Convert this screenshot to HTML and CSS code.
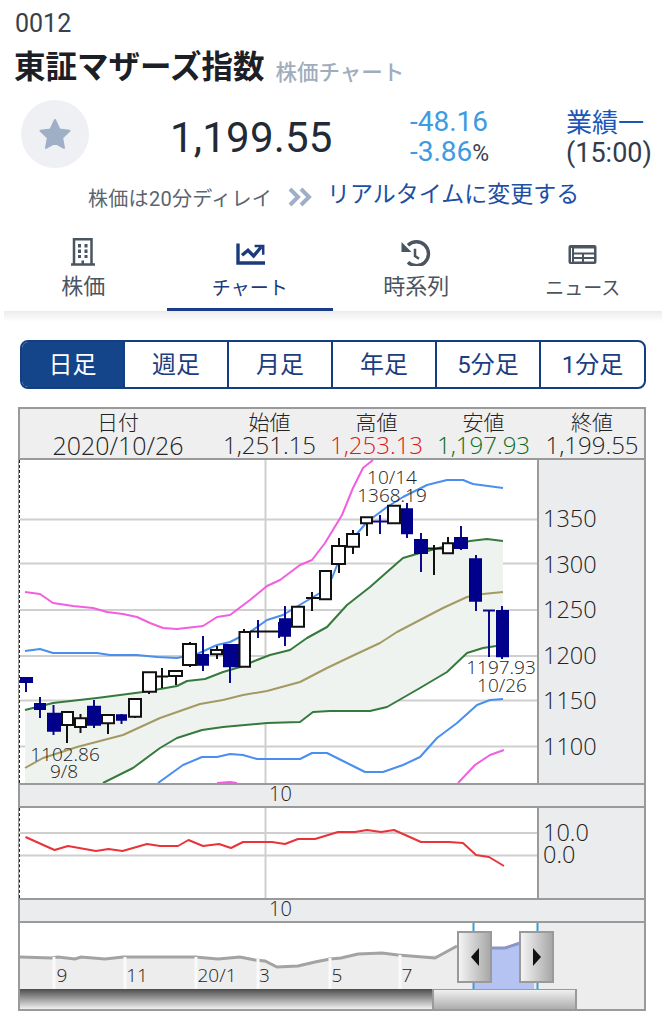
FILE: index.html
```html
<!DOCTYPE html>
<html lang="ja">
<head>
    <meta charset="UTF-8">
    <meta name="viewport" content="width=device-width, initial-scale=1.0">
    <title>東証マザーズ指数 株価チャート</title>
    <link rel="stylesheet" href="styles.css">
</head>
<body>
    <header class="head">
        <div class="code">0012</div>
        <h1 class="title">東証マザーズ指数<span class="subtitle">株価チャート</span></h1>
    </header>

    <section class="quote">
        <div class="star">
            <svg width="38" height="38" viewBox="0 0 38 38"><polygon class="star-shape" points="19,5 23.5,14.5 33.5,15.8 26.2,22.8 28,33 19,28 10,33 11.8,22.8 4.5,15.8 14.5,14.5"/></svg>
        </div>
        <div class="price">1,199.55</div>
        <div class="change">
            <div class="blue">-48.16</div>
            <div><span class="blue">-3.86</span><span class="pct">%</span></div>
        </div>
        <div class="earnings">
            <div class="earnings-link">業績一</div>
            <div>(15:00)</div>
        </div>
    </section>

    <div class="delay">
        <span class="delay-note">株価は20分ディレイ</span>
        <svg class="chevrons" width="24" height="20" viewBox="0 0 24 20"><path d="M2 2l8 8-8 8M13 2l8 8-8 8"/></svg>
        <span class="delay-link">リアルタイムに変更する</span>
    </div>

    <nav class="tabs">
        <div class="tab">
            <svg class="tab-icon" width="28" height="34" viewBox="0 0 28 34">
                <path class="line slim" d="M5 32.500V7.200h17.500v25.300" />
                <path class="line slim" d="M2 32.500h24" />
                <path class="fill" d="M9 12h3v3.500H9zM15.500 12h3v3.500h-3zM9 17.500h3v3.500H9zM15.500 17.500h3v3.500h-3zM9 23h3v3H9zM15.500 23h3v3h-3zM12.500 28.500H15v4h-2.500z"/>
            </svg>
            <span>株価</span>
        </div>
        <div class="tab active">
            <svg class="tab-icon" width="30" height="34" viewBox="0 0 30 34">
                <path class="line" d="M3 11.500V31h27" />
                <path class="line" d="M7 23.300l6-5 5.600 5.700 7.600-9" />
                <path class="line slim" d="M19.600 14h8.600v8.700" />
            </svg>
            <span class="tab-kana">チャート</span>
        </div>
        <div class="tab">
            <svg class="tab-icon" width="30" height="34" viewBox="0 0 30 34">
                <path class="line" d="M7 13.200A12 12 0 1 1 7 30.200" />
                <polygon class="fill" points="0.500,10 0.500,20 10.500,20"/>
                <path class="line slim" d="M14 16.700V24l4 2.700" />
            </svg>
            <span>時系列</span>
        </div>
        <div class="tab">
            <svg class="tab-icon" width="30" height="34" viewBox="0 0 30 34">
                <rect class="fill" x="0.500" y="13" width="28" height="19" rx="2"/>
                <path class="slot" d="M6 16.500h20v4H6zM6 22.500h8V25H6zM16 22.500h10V25H16zM6 27h8v2.500H6zM16 27h10v2.500H16zM3 16h1v14H3z"/>
            </svg>
            <span class="tab-kana">ニュース</span>
        </div>
    </nav>
    <div class="tabs-shadow"></div>

    <div class="ranges">
        <div class="range on">日足</div>
        <div class="range">週足</div>
        <div class="range">月足</div>
        <div class="range">年足</div>
        <div class="range">5分足</div>
        <div class="range">1分足</div>
    </div>

    <div class="panel">
        <div class="ohlc">
            <div class="ohlc-cell date"><div>日付</div><div class="val">2020/10/26</div></div>
            <div class="ohlc-cell"><div>始値</div><div class="val">1,251.15</div></div>
            <div class="ohlc-cell"><div>高値</div><div class="val red">1,253.13</div></div>
            <div class="ohlc-cell"><div>安値</div><div class="val green">1,197.93</div></div>
            <div class="ohlc-cell last"><div>終値</div><div class="val">1,199.55</div></div>
        </div>

        <div class="row main-row">
            <div class="plot">
                <svg width="517" height="323" viewBox="20 460 517 323">
                    <path class="grid" d="M20 519.500H537M20 563.500H537M20 610H537M20 656H537M20 700.500H537M20 746.500H537M265.500 460V783"/>
                    <polygon class="band" points="25,710 53,703 97,698 143,692 177,686 187,681 205,679 223,672 240,667 257,660 270,655 290,650 307,638 327,627 347,605 370,587 387,572 403,558 420,553 450,545 470,541 487,539 503,541 503,645 483,648 467,653 447,672 420,688 387,707 370,711 330,711 313,712 300,722 270,723 223,727 202,730 177,738 160,748 133,768 103,783 25,783"/>
                    <polyline class="ln magenta" points="25,592 40,594 53,603 73,606 93,608 107,612 123,614 137,617 150,623 163,628 177,629 203,626 217,617 230,615 250,600 267,586 280,580 300,565 312,560 325,543 342,515 353,488 363,468 373,460"/>
                    <polyline class="ln magenta" points="458,783 475,765 490,755 504,750"/>
                    <polyline class="ln magenta" points="217,783 230,782 237,783"/>
                    <polyline class="ln skyblue" points="25,651 40,649 53,653 97,653 110,655 137,655 157,657 177,658 197,654 217,645 230,642 250,632 267,620 283,615 303,603 320,593 332,578 343,550 367,522 387,507 403,497 427,485 447,480 463,480 473,484 503,488"/>
                    <polyline class="ln skyblue" points="158,783 183,765 202,757 217,757 230,754 243,755 257,759 300,759 312,753 327,753 347,763 365,772 383,772 403,765 420,757 437,738 457,723 477,705 490,700 503,699"/>
                    <polyline class="ln dkgreen" points="25,710 53,703 97,698 143,692 177,686 187,681 205,679 223,672 240,667 257,660 270,655 290,650 307,638 327,627 347,605 370,587 387,572 403,558 420,553 450,545 470,541 487,539 503,541"/>
                    <polyline class="ln dkgreen" points="103,783 133,768 160,748 177,738 202,730 223,727 267,723 300,722 313,712 330,711 370,711 387,707 420,688 447,672 467,653 483,648 503,645"/>
                    <polyline class="ln tan" points="25,768 43,758 77,747 123,735 160,718 200,704 223,700 243,695 267,691 300,682 327,668 350,657 380,643 397,632 420,620 443,608 467,597 483,594 503,592"/>

                    <path class="wick-dn" d="M26 683V692M40 697V718M53.500 705V735M94 700V728M121.500 714V724M203 636V671M230 667V683M258 620V638M279 622V638M285 606V646M380 515V534M407 503V538M421 533V572M461 526V550M476 555V611M489 610V657M502 606V659"/>
                    <path class="wick-up" d="M67 725V743M80.500 714V733M108 723V734M135 717V718M149 692V694M162 668V688M156 676.500H168M176 676V685M190 642V667M217 646V659M244 629V632M250 631.500H278M312 592V611M306 598H320M339 538V573M353 530V554M367 523V536M434 545V575M428 548.500H442M448 537V543"/>
                    <path class="wick-dn" d="M373 521.500H387M483 610.500H495"/>
                    <path class="body-dn" d="M20 677h13v6H20zM34 703h12v7H34zM47 712.700h14v19H47zM87 705.700h14v20H87zM116 714.300h11v6.400h-11zM197 654h12v11.700h-12zM223 644h16v23.300h-16zM279 618.300h12v18.400h-12zM401 508.300h12v26h-12zM414 539h14v15h-14zM454 537h14v12h-14zM469 558.300h13v43.400h-13zM496 610h13v47.300h-13z"/>
                    <path class="body-up" d="M62 712h11v13H62zM75 718.300h11v8.700H75zM102 715h12v8.300h-12zM129 699h12v17.700h-12zM143 672.300h13v19.400h-13zM169 671h13v5h-13zM183 644h13v21h-13zM211 650h11v4.300h-11zM239.500 632h10.500v34.700h-10.500zM292 606.700h12v20h-12zM320 571h11v28.300h-11zM332 546h13v18h-13zM347 534h12v12.700h-12zM361 517.300h11v6h-11zM388 505.700h12v17.600h-12zM443 543.300h10v10h-10z"/>

                    <text class="note" x="65" y="761" text-anchor="middle">1102.86</text>
                    <text class="note" x="64" y="778" text-anchor="middle">9/8</text>
                    <text class="note" x="392" y="484" text-anchor="middle">10/14</text>
                    <text class="note" x="392" y="502" text-anchor="middle">1368.19</text>
                    <text class="note" x="501" y="674" text-anchor="middle">1197.93</text>
                    <text class="note" x="502" y="692" text-anchor="middle">10/26</text>
                </svg>
            </div>
            <div class="axis axis-main">
                <div class="tick">1350</div>
                <div class="tick">1300</div>
                <div class="tick">1250</div>
                <div class="tick">1200</div>
                <div class="tick">1150</div>
                <div class="tick">1100</div>
            </div>
        </div>
        <div class="strip"><span>10</span></div>

        <div class="row sub-row">
            <div class="plot">
                <svg width="517" height="90" viewBox="20 808 517 90">
                    <path class="grid" d="M20 833H537M20 855.500H537M265.500 808V898"/>
                    <polyline class="ln red-ln" points="25.500,837 54.500,850 68,846 96,851 108.500,849 122.500,851 147,844 160,846 178,846 188.500,840 203,846 219,844 231,848 243,842 272,842 285,844 298,839 315,839 338,832 355,832 367,830 381,832 394,830 421,842 449,842 463,843 476,855 489,857 504,866"/>
                </svg>
            </div>
            <div class="axis axis-sub">
                <div class="tick-sub">10.0</div>
                <div class="tick-sub">0.0</div>
            </div>
        </div>
        <div class="strip"><span>10</span></div>

        <div class="nav">
            <svg class="nav-plot" width="624" height="66" viewBox="20 923 624 66">
                <polygon class="nav-sky" points="20,923 537,923 537,942 520,943 505,948 492,948 457,946 440,955 400,957 398,955 380,953 360,954 340,958 330,958 315,962 298,966 278,967 265,961 258,960 240,957 218,958 196,958 125,957 105,959 80,957 75,959 57,957 20,957"/>
                <polygon class="nav-sel" points="474,989 474,947 492,948 505,948 520,943 534,942 534,989"/>
                <polyline class="nav-line" points="20,957 52,958 58,957 75,959 81,957 105,959 123,957 195,957 218,959 240,957 255,960 265,961 277,967 298,966 315,962 330,959 341,958 358,954 382,953 398,955 435,958 457,946"/>
                <polyline class="nav-sel-line" points="492,948 505,948 520,943"/>
                <path class="nav-tick" d="M54 957V989M125 957V989M196 957V989M258 959V989M330 958V989M400 955V989"/>
                <path class="nav-mark" d="M473.500 923V989M537.500 923V989"/>
                <text class="nav-label" x="62" y="982" text-anchor="middle">9</text>
                <text class="nav-label" x="137" y="982" text-anchor="middle">11</text>
                <text class="nav-label" x="217" y="982" text-anchor="middle">20/1</text>
                <text class="nav-label" x="264.500" y="982" text-anchor="middle">3</text>
                <text class="nav-label" x="337" y="982" text-anchor="middle">5</text>
                <text class="nav-label" x="407" y="982" text-anchor="middle">7</text>
            </svg>
            <div class="handle handle-l"><span class="arrow-l"></span></div>
            <div class="handle handle-r"><span class="arrow-r"></span></div>
        </div>
        <div class="scroll">
            <div class="scroll-track"></div>
            <div class="scroll-thumb"></div>
        </div>
    </div>
</body>
</html>
```
FILE: styles.css
```css
* {
    box-sizing: border-box;
}
body {
    margin: 0;
    width: 666px;
    height: 1024px;
    overflow: hidden;
    background: #fff;
    color: #222a36;
    font-family: Roboto, "Noto Sans CJK JP", sans-serif;
}

/* header */
.head {
    padding-left: 15px;
    height: 100px;
}
.code {
    height: 48px;
    line-height: 48px;
    font-size: 25px;
    color: #36414f;
}
.title {
    margin: 0 0 0 -1px;
    height: 40px;
    line-height: 40px;
    font-size: 31.500px;
    font-weight: 700;
    color: #1c2026;
}
.subtitle {
    margin-left: 11px;
    font-size: 21.500px;
    font-weight: 500;
    color: #a0adbd;
    position: relative;
    top: 2px;
}

/* quote */
.quote {
    display: flex;
    height: 68px;
    padding-left: 21px;
    align-items: center;
}
.star {
    width: 68px;
    height: 68px;
    border-radius: 50%;
    background: #eef0f4;
    display: flex;
    align-items: center;
    justify-content: center;
}
.star-shape {
    fill: #9fb0c6;
    stroke: #9fb0c6;
    stroke-width: 2;
    stroke-linejoin: round;
}
.price {
    margin-left: 81px;
    width: 240px;
    font-size: 42px;
    letter-spacing: .2px;
    position: relative;
    top: 3px;
}
.change {
    width: 157px;
    padding-top: 8px;
    font-size: 28px;
    line-height: 30px;
}
.blue {
    color: #3d9be2;
}
.pct {
    font-size: 23px;
    color: #36414f;
}
.earnings {
    padding-top: 7px;
    font-size: 27px;
    line-height: 30px;
    white-space: nowrap;
    color: #333d4b;
    margin-left: -1px;
}
.earnings-link {
    color: #1a56b8;
    font-size: 26px;
}

.delay {
    margin-top: 10px;
    height: 34px;
    padding-left: 88px;
    display: flex;
    align-items: center;
}
.delay-note {
    font-size: 20px;
    letter-spacing: .3px;
    color: #5b6570;
    width: 200px;
    white-space: nowrap;
    position: relative;
    top: 2px;
}
.chevrons {
    fill: none;
    stroke: #9fb0c6;
    stroke-width: 4;
    position: relative;
    top: 2px;
}
.delay-link {
    margin-left: 15px;
    font-size: 23px;
    color: #1d4fa5;
    position: relative;
    top: -3px;
}

/* tabs */
.tabs {
    margin-top: 20px;
    height: 79px;
    display: grid;
    grid-template-columns: repeat(4, 1fr);
}
.tab {
    display: flex;
    flex-direction: column;
    align-items: center;
    color: #4a5562;
    font-size: 22px;
    line-height: 30px;
    border-bottom: 3px solid transparent;
}
.tab-icon {
    margin-bottom: 6px;
    flex: none;
}
.tab-icon .line {
    fill: none;
    stroke: currentColor;
    stroke-width: 3.400;
}
.tab-icon .slim {
    stroke-width: 2.500;
}
.tab-icon .fill {
    fill: currentColor;
}
.tab-icon .slot {
    fill: #fff;
}
.tab-kana {
    font-size: 19px;
    padding-top: 2px;
}
.tab.active {
    color: #1d3a7a;
    border-bottom-color: #1a3d8a;
}
.tabs-shadow {
    height: 11px;
    margin: 0 4px;
    background: linear-gradient(#ececee, #fff);
}

.ranges {
    margin: 18px 20px 0;
    height: 49px;
    display: grid;
    grid-template-columns: 101px repeat(4, 104px) 105px;
    border: 2px solid #133f80;
    border-radius: 8px;
    overflow: hidden;
}
.range {
    display: flex;
    align-items: center;
    justify-content: center;
    padding-bottom: 5px;
    font-size: 24px;
    color: #1d3d7f;
    border-left: 2px solid #133f80;
}
.range:first-child {
    border-left: 0;
}
.range.on {
    background: #14448a;
    color: #fff;
}

/* chart panel */
.panel {
    margin: 18px 20px 0 18px;
    width: 628px;
    border: 2px solid #9a9a9a;
    font-family: "Open Sans", "Noto Sans CJK JP", sans-serif;
    font-weight: 300;
    color: #222;
}
.ohlc {
    height: 51px;
    background: #efefef;
    border-bottom: 2px solid #9a9a9a;
    display: grid;
    grid-template-columns: 196px 107px 107px 107px 107px;
    font-size: 21px;
    line-height: 23px;
    text-align: center;
    padding-top: 2px;
}
.ohlc-cell {
    white-space: nowrap;
}
.ohlc-cell.last {
    padding-left: 3px;
}
.val {
    font-size: 24px;
    line-height: 22px;
}
.date .val {
    font-size: 25px;
}
.red {
    color: #e01818;
}
.green {
    color: #0c6b1c;
}
.row {
    display: flex;
    border-bottom: 2px solid #9a9a9a;
}
.main-row {
    height: 325px;
}
.sub-row {
    height: 92px;
}
.plot {
    width: 518px;
    margin-left: -1px;
    border-left: 1px dashed #222;
    background: #fff;
    display: flex;
}
.axis {
    flex: 1;
    background: #ebecee;
    border-left: 2px solid #9a9a9a;
    font-size: 23.500px;
    padding-left: 4px;
}
.axis-main {
    padding-top: 36px;
}
.tick {
    height: 45.500px;
    line-height: 45.500px;
}
.axis-sub {
    padding-top: 13px;
}
.tick-sub {
    height: 22px;
    line-height: 22px;
}
.strip {
    height: 23px;
    border-bottom: 2px solid #9a9a9a;
    background: #ebecee;
    font-size: 20px;
    line-height: 17px;
    padding-left: 249px;
}

/* chart drawing */
.grid {
    fill: none;
    stroke: #cfcfcf;
    stroke-width: 2;
}
.band {
    fill: #eff3ef;
}
.ln {
    fill: none;
    stroke-width: 2;
    stroke-linejoin: round;
}
.magenta {
    stroke: #f25ee0;
}
.skyblue {
    stroke: #4a8ef0;
}
.dkgreen {
    stroke: #357a3c;
}
.tan {
    stroke: #a39a63;
}
.red-ln {
    stroke: #e8333b;
}
.wick-dn {
    fill: none;
    stroke: #0a0a8c;
    stroke-width: 2;
}
.wick-up {
    fill: none;
    stroke: #111;
    stroke-width: 2;
}
.body-dn {
    fill: #00008b;
}
.body-up {
    fill: #fff;
    stroke: #111;
    stroke-width: 2;
}
.note {
    font-size: 19px;
    fill: #222;
}

/* navigator */
.nav {
    position: relative;
    height: 66px;
}
.nav-plot {
    display: block;
    background: #ededee;
}
.nav-sky {
    fill: #fff;
}
.nav-sel {
    fill: #b5c3f3;
}
.nav-line {
    fill: none;
    stroke: #a3a3a3;
    stroke-width: 3;
}
.nav-sel-line {
    fill: none;
    stroke: #8a96c8;
    stroke-width: 3;
}
.nav-tick {
    fill: none;
    stroke: #fafafa;
    stroke-width: 3;
}
.nav-mark {
    fill: none;
    stroke: #3a9fd0;
    stroke-width: 2;
}
.nav-label {
    font-size: 19px;
    fill: #222;
}
.handle {
    position: absolute;
    top: 8px;
    width: 35px;
    height: 52px;
    border: 2px solid #9a9a9a;
    background: linear-gradient(to right, #f4f4f4, #a8a8a8);
    display: flex;
    align-items: center;
    justify-content: center;
}
.handle-l {
    left: 437px;
}
.handle-r {
    left: 499px;
}
.arrow-l {
    border: 8px solid transparent;
    border-left: 0;
    border-right: 8px solid #111;
    border-top-width: 9px;
    border-bottom-width: 9px;
}
.arrow-r {
    border: 8px solid transparent;
    border-right: 0;
    border-left: 8px solid #111;
    border-top-width: 9px;
    border-bottom-width: 9px;
}
.scroll {
    display: flex;
    height: 20px;
    background: #ededee;
}
.scroll-track {
    width: 412px;
    background: linear-gradient(#4c4c4c, #f0f0f0);
}
.scroll-thumb {
    width: 145px;
    margin-top: -1px;
    border-left: 2px solid #9a9a9a;
    border-right: 2px solid #9a9a9a;
    border-top: 2px solid #9a9a9a;
    background: linear-gradient(#f0f0f0, #adadad);
}
```
